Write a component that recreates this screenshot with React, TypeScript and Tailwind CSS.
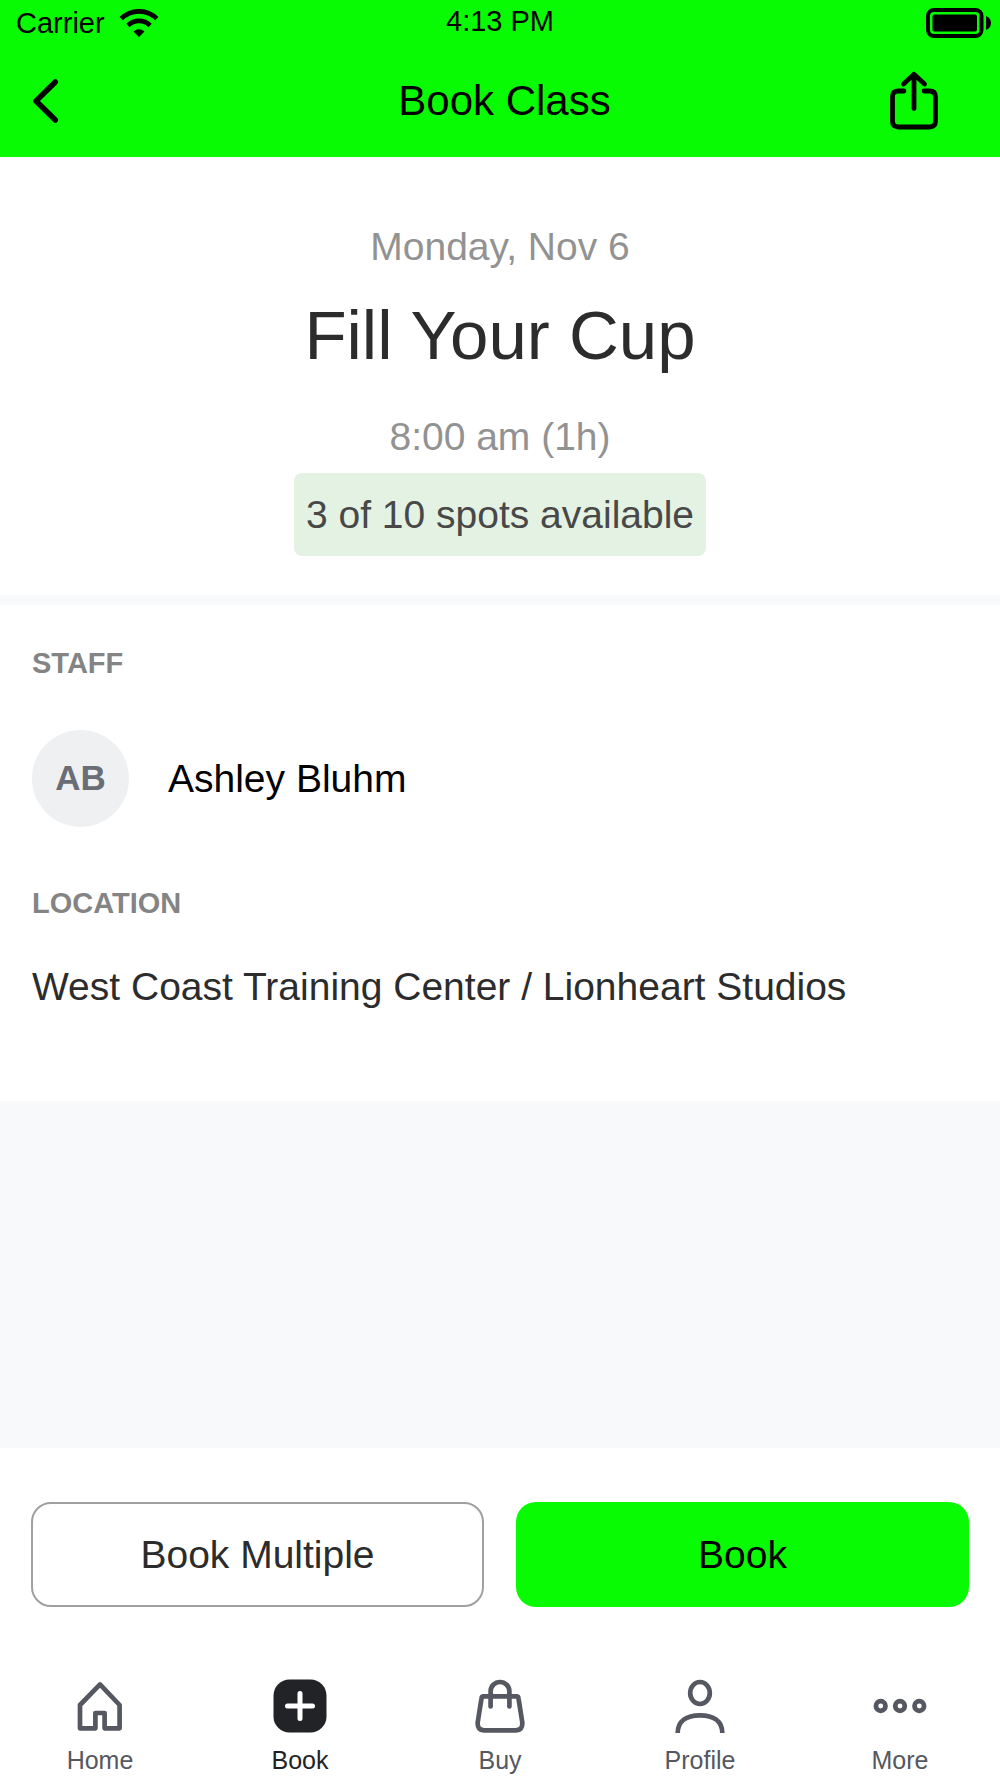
import type { ReactNode } from 'react'
import clsx from 'clsx'

interface Tab {
  label: string
  icon: ReactNode
  active?: boolean
}

const iconProps = {
  viewBox: '0 0 54 54',
  className: 'size-[54px]',
  fill: 'none',
  stroke: 'currentColor',
  strokeWidth: 4.7,
  'aria-hidden': true,
}

const tabs: Tab[] = [
  {
    label: 'Home',
    icon: (
      <svg {...iconProps} strokeLinejoin="round">
        <path d="M27 5.4 46.6 26v23.3H31.6V34h-9.2v15.3H7V26Z" />
      </svg>
    ),
  },
  {
    label: 'Book',
    active: true,
    icon: (
      <svg {...iconProps} strokeLinecap="round">
        <rect x="0.5" y="0.5" width="53" height="53" rx="16" fill="currentColor" stroke="none" />
        <path d="M27 14.500v25M14.500 27h25" stroke="#fff" strokeWidth="5" />
      </svg>
    ),
  },
  {
    label: 'Buy',
    icon: (
      <svg {...iconProps} strokeLinecap="round" strokeLinejoin="round">
        <path d="M10.500 17.300H43.500Q45.300 17.300 45.500 19.300L49.300 43.500Q49.800 51.300 42.500 51.300H11.500Q4.200 51.300 4.700 43.500L8.500 19.300Q8.700 17.300 10.500 17.300Z" />
        <path d="M17.600 27.500V12.400a9.400 9.400 0 0 1 18.800 0v15.100" />
      </svg>
    ),
  },
  {
    label: 'Profile',
    icon: (
      <svg {...iconProps}>
        <ellipse cx="27" cy="14" rx="9.800" ry="11" />
        <path d="M4.700 54C4.700 42 13.500 36.300 27 36.300S49.300 42 49.300 54" />
      </svg>
    ),
  },
  {
    label: 'More',
    icon: (
      <svg {...iconProps}>
        <circle cx="7.700" cy="27" r="4.800" />
        <circle cx="27" cy="27" r="4.800" />
        <circle cx="46.300" cy="27" r="4.800" />
      </svg>
    ),
  },
]

function StatusBar() {
  return (
    <div className="grid h-[46px] grid-cols-3 items-center px-2 text-[29px] leading-8">
      <div className="flex items-center gap-[14px] pl-2">
        <span>Carrier</span>
        <svg viewBox="0 0 40 28" className="h-7 w-10" fill="none" stroke="currentColor" strokeWidth="4.700" aria-hidden="true">
          <path d="M2.200 9.700a25.200 25.200 0 0 1 35.600 0" />
          <path d="M8.900 16.500a15.700 15.700 0 0 1 22.200 0" />
          <path d="M20 28l-5.500-5.500a7.800 7.800 0 0 1 11 0Z" fill="currentColor" stroke="none" />
        </svg>
      </div>
      <time className="pb-1 text-center">4:13 PM</time>
      <svg viewBox="0 0 66 30" className="h-[30px] w-[66px] justify-self-end" aria-label="Battery full">
        <rect x="2" y="2" width="53.500" height="26" rx="6" fill="none" stroke="currentColor" strokeWidth="4" />
        <rect x="6.500" y="6.500" width="44.500" height="17" rx="2" fill="currentColor" />
        <path d="M60 8q5 2 5 7t-5 7Z" fill="currentColor" />
      </svg>
    </div>
  )
}

function Header() {
  return (
    <header className="bg-[#08fb03] text-black">
      <StatusBar />
      <div className="flex h-[111px] items-center justify-between pr-[60px] pb-0.5 pl-[31px]">
        <button type="button" aria-label="Back" className="w-[52px]">
          <svg viewBox="0 0 28 44" className="h-11 w-7" fill="none" stroke="currentColor" strokeWidth="5.500" strokeLinecap="round" strokeLinejoin="round">
            <path d="M24.300 3 5 22 24.300 41" />
          </svg>
        </button>
        <h1 className="pl-[38px] text-[42px] leading-[48px]">Book Class</h1>
        <button type="button" aria-label="Share">
          <svg viewBox="0 0 52 60" className="h-[60px] w-[52px]" fill="none" stroke="currentColor" strokeWidth="4.800" strokeLinecap="round" strokeLinejoin="round">
            <path d="M16 20h-5.500q-6 0-6 6v24q0 6 6 6h31q6 0 6-6V26q0-6-6-6H36" />
            <path d="M26 37.500V3.500M15.500 13 26 3.300 36.500 13" />
          </svg>
        </button>
      </div>
    </header>
  )
}

function ClassSummary() {
  return (
    <section className="flex flex-col items-center bg-white pt-[67px] pb-[39px] text-center">
      <p className="text-[39px] leading-[46px] text-[#929292]">Monday, Nov 6</p>
      <h2 className="mt-[26px] text-[69px] leading-[80px] text-[#2c2c2c]">Fill Your Cup</h2>
      <p className="mt-[38px] text-[39px] leading-[46px] text-[#929292]">8:00 am (1h)</p>
      <p className="mt-[13px] rounded-lg bg-[#e4f2e4] px-3 py-[18px] text-[39px] leading-[47px] text-[#484848]">
        3 of 10 spots available
      </p>
    </section>
  )
}

function ClassDetails() {
  return (
    <section className="border-t-[10px] border-[#f8f9fb] bg-white px-8 pt-[42px] pb-[91px]">
      <h3 className="text-[29px] leading-8 font-bold text-[#848484]">STAFF</h3>
      <div className="mt-[51px] flex items-center gap-[39px]">
        <div className="flex size-[97px] items-center justify-center rounded-full bg-[#eff0f2] text-[35px] font-bold text-[#6a6c76]">
          AB
        </div>
        <p className="text-[39px] leading-[46px] text-black">Ashley Bluhm</p>
      </div>
      <h3 className="mt-[60px] text-[29px] leading-8 font-bold text-[#848484]">LOCATION</h3>
      <p className="mt-[45px] text-[39px] leading-[46px] text-[#2c2c2c]">
        West Coast Training Center / Lionheart Studios
      </p>
    </section>
  )
}

function Actions() {
  return (
    <div className="grid grid-cols-2 gap-8 bg-white px-[31px] pt-[54px] text-[39px] leading-[46px]">
      <button type="button" className="h-[105px] rounded-[20px] border-2 border-[#a0a0a0] text-[#2c2c2c]">
        Book Multiple
      </button>
      <button type="button" className="h-[105px] rounded-[20px] bg-[#08fb03] text-black">
        Book
      </button>
    </div>
  )
}

function TabBar() {
  return (
    <nav className="grid grid-cols-5 bg-white pt-[72px] pb-0.5">
      {tabs.map(tab => (
        <a
          key={tab.label}
          href={`#${tab.label.toLowerCase()}`}
          aria-current={tab.active ? 'page' : undefined}
          className={clsx(
            'flex flex-col items-center gap-[11px] text-[25px] leading-8',
            tab.active ? 'text-[#222327]' : 'text-[#555761]'
          )}
        >
          {tab.icon}
          {tab.label}
        </a>
      ))}
    </nav>
  )
}

export default function App() {
  return (
    <div className="flex min-h-screen flex-col bg-[#f8f9fb] font-['Liberation_Sans',Arial,sans-serif]">
      <Header />
      <main className="flex flex-1 flex-col">
        <ClassSummary />
        <ClassDetails />
        <div className="flex-1" />
        <Actions />
      </main>
      <TabBar />
    </div>
  )
}
